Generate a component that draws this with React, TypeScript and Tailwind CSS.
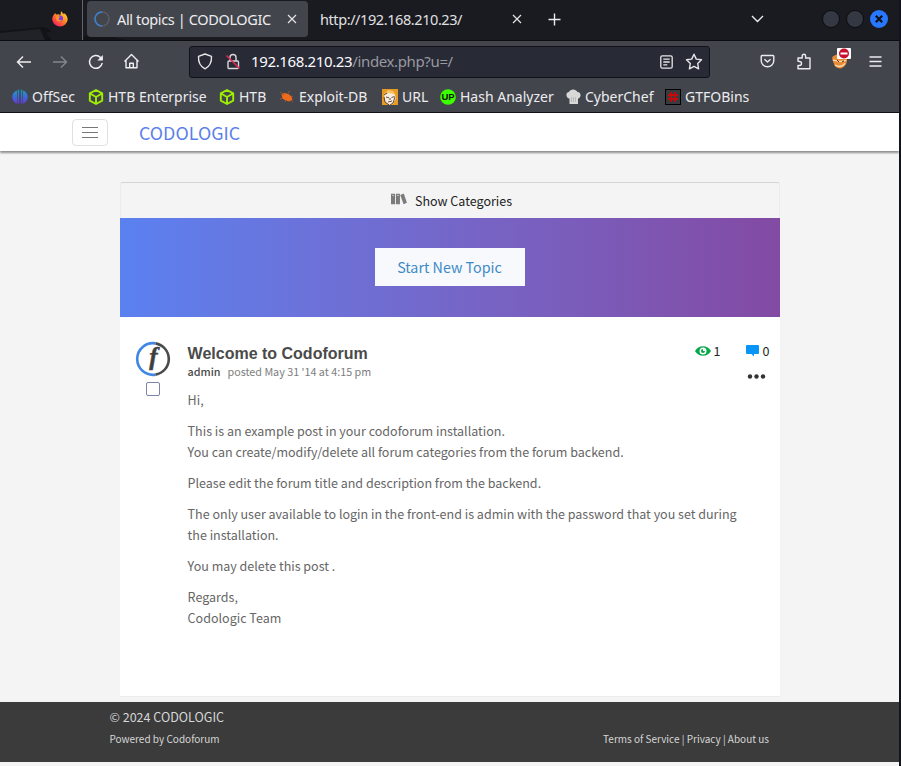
import React from "react";

const chromeFont = "font-['Noto_Sans',sans-serif]";
const pageFont = "font-['Noto_Sans_CJK_SC','Open_Sans',sans-serif]";

function Firefox() {
  return (
    <svg width="18" height="18" viewBox="0 0 18 18">
      <defs>
        <linearGradient id="fx" x1="1" y1="0" x2="0.2" y2="1">
          <stop offset="0" stopColor="#ffe83a" />
          <stop offset="0.45" stopColor="#ff9425" />
          <stop offset="0.75" stopColor="#ff4b3c" />
          <stop offset="1" stopColor="#e8197a" />
        </linearGradient>
      </defs>
      <path d="M3 4.500 4.200 3l.8 1.600 2.200-.3L9.500 5 10 1.200c1 .6 1.600 1.600 2 2.600l1.700-.3c1.900 1.600 3 3.700 3 6.200a7.800 7.800 0 0 1-15.400.4C1 8 1.800 6 3 4.500z" fill="url(#fx)" />
      <circle cx="9" cy="8.600" r="3" fill="#7b3fe0" />
      <path d="M5 7c1.500-1.500 3-1 4 .2L7.500 8.500c0 1.500 2 2 3.500 1-1 3-5 2.500-5.800.3z" fill="#ff9425" />
    </svg>
  );
}

function Close({ className = "" }: { className?: string }) {
  return (
    <svg className={className} width="10" height="10" viewBox="0 0 10 10" stroke="#e4e4e6" strokeWidth="1.200" fill="none">
      <path d="M1 1l8 8M9 1l-8 8" />
    </svg>
  );
}

function TabStrip() {
  return (
    <div className="relative flex h-[41px] border-b border-[#0c0d11] bg-[#1a1b20]">
      <svg className="absolute left-0 top-0" width="130" height="40" viewBox="0 0 130 40">
        <path d="M0 31l44-4 8 4-6 2 6 7H0z" fill="#121317" />
        <path d="M0 33l40-4 5 11H0z" fill="#202227" />
        <path d="M84 36l20-1 22 5H84z" fill="#121317" />
      </svg>
      <div className="relative flex w-[83px] items-start border-r border-[#63656b] pl-[51px] pt-[10px]">
        <Firefox />
      </div>
      <div className="relative ml-1 mt-px flex h-9 w-[221px] items-center rounded bg-[#43454d] pl-[7px]">
        <svg width="16" height="16" viewBox="0 0 16 16" fill="none" strokeWidth="1.500">
          <circle cx="8" cy="8" r="7" stroke="#5a5c64" />
          <path d="M8 15A7 7 0 0 1 8 1" stroke="#3d7fd0" />
        </svg>
        <span className="ml-[7px] w-[170px] whitespace-nowrap text-[14.5px] leading-9 tracking-[-0.37px] text-[#ececee]">All topics | CODOLOGIC</span>
        <Close />
      </div>
      <div className="flex h-[38px] w-[214px] items-center pl-3">
        <span className="w-[192px] whitespace-nowrap text-[14.5px] leading-9 tracking-[-0.42px] text-[#e0e0e2]">http://192.168.210.23/</span>
        <Close />
      </div>
      <svg className="ml-[26px] mt-[13px]" width="13" height="13" viewBox="0 0 13 13" stroke="#ececee" strokeWidth="1.400">
        <path d="M6.500 .5v12M.5 6.500h12" />
      </svg>
      <svg className="ml-[190px] mt-[15px]" width="13" height="8" viewBox="0 0 13 8" fill="none" stroke="#ececee" strokeWidth="1.400">
        <path d="M1 1l5.500 5.500L12 1" />
      </svg>
      <div className="ml-[58px] mt-[10px] flex h-[18px] items-center gap-[6px]">
        <span className="size-[18px] rounded-full border border-[#0b0c0f] bg-[#343843]" />
        <span className="size-[18px] rounded-full border border-[#0b0c0f] bg-[#343843]" />
        <svg width="18" height="18" viewBox="0 0 18 18">
          <circle cx="9" cy="9" r="9" fill="#2777ff" />
          <path d="M5.800 5.800l6.400 6.400M12.200 5.800l-6.400 6.400" stroke="#101218" strokeWidth="2.200" />
        </svg>
      </div>
    </div>
  );
}

function Toolbar() {
  return (
    <div className="flex h-10 items-center bg-[#43454d] pl-4">
      <svg className="mt-px" width="16" height="14" viewBox="0 0 16 14" fill="none" stroke="#f0f0f2" strokeWidth="1.400">
        <path d="M15 7H1.500M7 1.500L1.500 7 7 12.500" />
      </svg>
      <svg className="ml-5 mt-px" width="16" height="14" viewBox="0 0 16 14" fill="none" stroke="#85878d" strokeWidth="1.400">
        <path d="M1 7h13.500M9 1.500L14.500 7 9 12.500" />
      </svg>
      <svg className="ml-5 mt-[2px]" width="16" height="16" viewBox="0 0 16 16" fill="none" stroke="#f0f0f2" strokeWidth="1.500">
        <path d="M14.200 9A6.400 6.400 0 1 1 12.500 3.500l1.500 1.700" />
        <path d="M14.900 1v5.600H9.300z" fill="#f0f0f2" stroke="none" />
      </svg>
      <svg className="ml-[19px]" width="17" height="17" viewBox="0 0 17 17" fill="none" stroke="#f0f0f2" strokeWidth="1.400" strokeLinejoin="round">
        <path d="M1.500 8.500L8.500 1.500l7 7M3 7.500v7.300h11V7.500M6.700 14.500v-4.200h3.600v4.200" />
      </svg>
      <div className="ml-[49px] mt-px flex h-8 w-[521px] items-center rounded-[3px] border border-[#111217] bg-[#282a36] pl-[7px]">
        <svg width="16" height="17" viewBox="0 0 16 17" fill="none" stroke="#e6e6e9" strokeWidth="1.400" strokeLinejoin="round">
          <path d="M8 1l6.500 2.400c.3 5.600-1.700 10-6.500 12.400C3.200 13.400 1.200 9 1.500 3.400z" />
        </svg>
        <svg className="ml-3" width="16" height="17" viewBox="0 0 16 17" fill="none" stroke="#d8d8dc" strokeWidth="1.400">
          <rect x="3" y="8" width="10.500" height="7.500" rx="1" />
          <path d="M5 8V4.500a3 3 0 0 1 6 0V8" />
          <path d="M1.500 2.500l13 13" stroke="#e22850" strokeWidth="1.600" />
        </svg>
        <span className="-mt-px ml-[10px] w-[409px] whitespace-nowrap text-[15px] leading-8 tracking-[-0.37px] text-[#9899a1]">
          <span className="text-[#fbfbfe]">192.168.210.23</span>/index.php?u=/
        </span>
        <svg width="13" height="14" viewBox="0 0 13 14" fill="none" stroke="#e6e6e9" strokeWidth="1.300">
          <rect x=".8" y=".8" width="11.400" height="12.400" rx="1.500" />
          <path d="M3.300 4.200h6.400M3.300 7h6.400M3.300 9.800h4" />
        </svg>
        <svg className="ml-3" width="18" height="17" viewBox="0 0 18 17" fill="none" stroke="#e6e6e9" strokeWidth="1.400" strokeLinejoin="round">
          <path d="M9 1.200l2.300 4.900 5.200.7-3.800 3.700.9 5.300L9 13.300l-4.600 2.500.9-5.300L1.500 6.800l5.200-.7z" />
        </svg>
      </div>
      <svg className="ml-[49.500px]" width="15" height="14" viewBox="0 0 15 14" fill="none" stroke="#ececee" strokeWidth="1.400" strokeLinejoin="round">
        <path d="M2 1.500h11c.5 0 .8.3.8.8V6.500a6.300 6.300 0 0 1-12.600 0V2.300c0-.5.300-.8.800-.8z" />
        <path d="M4.500 5.200l3 2.800 3-2.800" />
      </svg>
      <svg className="ml-[21px]" width="16" height="17" viewBox="0 0 16 17" fill="none" stroke="#ececee" strokeWidth="1.400" strokeLinejoin="round">
        <path d="M2 8V5h4.200V3a1.700 1.700 0 0 1 3.400 0v2H14v10.700H2v-3.200h1.500a2 2 0 0 0 0-4z" />
      </svg>
      <svg className="mb-[5px] ml-[19.500px]" width="21" height="21" viewBox="0 0 21 21">
        <path d="M1 10c3-5 11-5 15 1 .5 4-2.500 9-6.500 9.500C4 20.500 3 17 1 10z" fill="#e88b35" />
        <path d="M2 12c4 1 10 3 13 0M4 17c3 2 7 2 10-1.500" stroke="#f7dcb5" strokeWidth="1.300" fill="none" />
        <path d="M6 12l2 2M11 14l2-1" stroke="#63320d" />
        <rect x="6" y="0" width="14" height="11" rx="1" fill="#fff" />
        <circle cx="13" cy="5.500" r="5" fill="#c8102e" />
        <path d="M9.500 5.500h7" stroke="#fff" strokeWidth="2" />
      </svg>
      <svg className="ml-[17px]" width="13" height="11" viewBox="0 0 13 11" stroke="#ececee" strokeWidth="1.300">
        <path d="M.5 1h12M.5 5.500h12M.5 10h12" />
      </svg>
    </div>
  );
}

function Cube() {
  return (
    <svg width="16" height="16" viewBox="0 0 16 16" fill="none" stroke="#9fef00" strokeWidth="1.900" strokeLinejoin="round">
      <path d="M8 1l6.200 3.400v7.200L8 15l-6.200-3.400V4.400zM2 4.500L8 8l6-3.500M8 8v6.500" />
    </svg>
  );
}

function Bookmark({ icon, label, className }: { icon: React.ReactNode; label: string; className: string }) {
  return (
    <div className={"flex shrink-0 items-center gap-1 whitespace-nowrap " + className}>
      <span className="flex w-4 shrink-0 justify-center">{icon}</span>
      <span className="text-sm leading-[30px]">{label}</span>
    </div>
  );
}

function Bookmarks() {
  return (
    <div className="flex h-[31px] items-center bg-[#43454d] pl-3 text-[#ececee]">
      <Bookmark className="w-[76px]" label="OffSec" icon={
        <svg width="16" height="16" viewBox="0 0 16 16">
          <defs><linearGradient id="os" gradientUnits="userSpaceOnUse" x1="0" y1="0" x2="0" y2="16"><stop offset="0" stopColor="#12a5c5" /><stop offset="1" stopColor="#6c2ce8" /></linearGradient></defs>
          <path d="M5.300 1.200v13.600C-1.500 12.500-1.500 3.500 5.300 1.200zM6 1l1.200-.5V14L6 15.200zM8.800.5l1.200.5v14.200L8.800 14zM10.700 1.200c6.800 2.300 6.800 11.300 0 13.600z" fill="url(#os)" />
        </svg>} />
      <Bookmark className="w-[131px]" label="HTB Enterprise" icon={<Cube />} />
      <Bookmark className="w-[60px]" label="HTB" icon={<Cube />} />
      <Bookmark className="w-[103px]" label="Exploit-DB" icon={
        <svg width="16" height="14" viewBox="0 0 16 14">
          <path d="M2.500 4l3-1 4 1 3 2.500 1 3-1.500 1-2 1-3-1-3-1.500-1-2z" fill="#ee6a1c" />
          <path d="M1 2l4 3M9 3l2-2M4 8l-3 1M7 10l-1 2M12 7l2-1M12 10l2 2" stroke="#a2552c" />
        </svg>} />
      <Bookmark className="w-[58px]" label="URL" icon={
        <svg width="16" height="16" viewBox="0 0 16 16">
          <rect width="16" height="16" fill="#e99a22" />
          <path d="M2 5l5-3 5 2 2 5-3 6-3 1-5-3z" fill="#f7ecde" />
          <path d="M2 5l4-4 5 1 3 4-3-1-4-1-4 2z" fill="#f7c46a" />
          <path d="M2 6l3-2M4 8l3 .8M9.500 8.500l3-1M6 13l4-1M2 8l1 5 4 3M13 8l-2 6-3 2M8 9v2" stroke="#33241b" strokeWidth=".8" fill="none" />
        </svg>} />
      <Bookmark className="w-[125px]" label="Hash Analyzer" icon={
        <svg width="16" height="16" viewBox="0 0 16 16">
          <circle cx="8" cy="8" r="7.800" fill="#3cff00" />
          <text x="8" y="11.300" textAnchor="middle" fontSize="9.500" fontWeight="900" fontFamily="Liberation Sans" fill="#061503">UP</text>
        </svg>} />
      <Bookmark className="w-[100px]" label="CyberChef" icon={
        <svg width="15" height="16" viewBox="0 0 15 16">
          <path d="M3.500 15V9.500C-.5 9-.5 3 3 3c1-3.500 7-3.500 8.500 0 4 0 4 6 .5 6.500V15z" fill="#d8d8d8" />
          <path d="M5.500 8v5M7.500 8v5M9.500 8v5" stroke="#aaa" strokeWidth=".7" />
        </svg>} />
      <Bookmark className="" label="GTFOBins" icon={
        <svg width="16" height="16" viewBox="0 0 16 16">
          <rect x=".5" y=".5" width="15" height="15" fill="#383a40" stroke="#000" />
          <path d="M6 3v10M10 3v10M3 6h10M3 10h10" stroke="#c40b0b" strokeWidth="1.800" />
        </svg>} />
    </div>
  );
}

function Avatar() {
  return (
    <svg width="36" height="36" viewBox="0 0 36 36" fill="none">
      <path d="M20.500 33.600A15.800 15.800 0 1 1 20.500 2.400" stroke="#3f87e5" strokeWidth="2.600" />
      <path d="M20.500 2.400a15.800 15.800 0 0 1 0 31.200" stroke="#4b4b4d" strokeWidth="2.600" />
      <text x="18.500" y="24" textAnchor="middle" fontFamily="Liberation Serif" fontStyle="italic" fontWeight="700" fontSize="25" fill="#3f3f41" stroke="#3f3f41" strokeWidth=".5">f</text>
    </svg>
  );
}

function Topic() {
  return (
    <article className="flex h-[380px] border-b border-[#ececec] bg-white pl-[15px] pt-6">
      <div className="flex w-9 flex-col items-center">
        <Avatar />
        <span className="mt-[5px] size-[14px] rounded-[2px] border border-[#7e83a8] bg-white" />
      </div>
      <div className="ml-[16.600px] w-[560px]">
        <h2 className="pt-px font-['Liberation_Sans',Arial,sans-serif] text-base font-bold leading-[23px] text-[#4a4a4a]">Welcome to Codoforum</h2>
        <p className="flex gap-[7px] text-[10.760px] leading-[14px] text-[#7d7d7d]">
          <span className="font-medium text-[#4a4a4a]">admin</span>
          <span>posted May 31 '14 at 4:15 pm</span>
        </p>
        <div className="mt-[10px] space-y-[10px] text-[12.530px] leading-[21px] text-[#666]">
          <p>Hi,</p>
          <p>This is an example post in your codoforum installation.<br />You can create/modify/delete all forum categories from the forum backend.</p>
          <p>Please edit the forum title and description from the backend.</p>
          <p className="whitespace-nowrap">The only user available to login in the front-end is admin with the password that you set during<br />the installation.</p>
          <p>You may delete this post .</p>
          <p>Regards,<br />Codologic Team</p>
        </div>
      </div>
      <div className="-ml-14 flex flex-1 flex-col items-end pr-[10.500px] text-[12.520px] text-[#222]">
        <div className="flex h-5 items-center">
          <svg width="16" height="10" viewBox="0 0 16 10">
            <path d="M0 5C3-1.300 13-1.300 16 5 13 11.300 3 11.300 0 5z" fill="#08a84a" />
            <circle cx="8" cy="5" r="3.500" fill="#fff" />
            <circle cx="8" cy="5" r="2" fill="#08a84a" />
            <path d="M8 5V2.700A2.300 2.300 0 0 1 10.300 5z" fill="#fff" />
          </svg>
          <span className="ml-[3px]">1</span>
          <svg className="ml-[25px]" width="13" height="12" viewBox="0 0 13 12">
            <path d="M1 0h11a1 1 0 0 1 1 1v7a1 1 0 0 1-1 1H8v2.500L5.500 9H1a1 1 0 0 1-1-1V1a1 1 0 0 1 1-1z" fill="#0796f7" />
          </svg>
          <span className="ml-1">0</span>
        </div>
        <svg className="mr-[3.500px] mt-[13px]" width="19" height="5" viewBox="0 0 19 5" fill="#333">
          <circle cx="3" cy="2.500" r="2.200" /><circle cx="9.500" cy="2.500" r="2.200" /><circle cx="16" cy="2.500" r="2.200" />
        </svg>
      </div>
    </article>
  );
}

export default function App() {
  return (
    <div className={"flex h-[766px] w-[901px] flex-col overflow-hidden border-r-2 border-[#13141b] bg-[#f4f4f4] " + chromeFont}>
      <TabStrip />
      <Toolbar />
      <Bookmarks />
      <div className={"flex flex-1 flex-col border-t border-[#111218] " + pageFont}>
        <header className="flex h-[38px] shrink-0 items-center bg-white pl-[72px] shadow-[0_2px_2px_rgba(0,0,0,0.42)]">
          <button className="flex h-[27px] w-9 flex-col items-center justify-center gap-1 rounded border border-[#e0e0e0]">
            <span className="h-px w-4 bg-[#777]" />
            <span className="h-px w-4 bg-[#777]" />
            <span className="h-px w-4 bg-[#777]" />
          </button>
          <span className="-mt-px ml-[31px] text-[17.900px] leading-[38px] text-[#5b7fec]">CODOLOGIC</span>
        </header>
        <main className="ml-[120px] mt-[31px] w-[660px]">
          <div className="flex h-9 items-center justify-center rounded-t-[3px] border-x border-t border-x-[#ececec] border-t-[#d4d4d4] pl-[3px] text-[12.520px] text-[#222]">
            <svg className="-mt-[3px] mr-2" width="16" height="12" viewBox="0 0 17 12" fill="#7b7b7b">
              <path d="M0 .5h4.300v11H0zM5.200.5h4.300v11H5.200zM9.800 1.700l3.800-1.500 3.300 9.800-3.500 1.500z" />
              <path d="M1 2.200h2.300M6.200 2.200h2.300" stroke="#ddd" strokeWidth=".7" />
            </svg>
            <span className="pt-[2px]">Show Categories</span>
          </div>
          <div className="flex h-[99px] justify-center bg-gradient-to-r from-[#5a81f0] to-[#824aa3] pt-[30px]">
            <button className="h-[38px] w-[150px] bg-[#f8f9fc] pr-px text-[14.300px] text-[#3c8bc8]">Start New Topic</button>
          </div>
          <Topic />
        </main>
        <footer className="mt-[5px] h-[60px] shrink-0 bg-[#3b3b3b] pl-[109.500px] pr-[130px] text-[#d6d6d6]">
          <p className="pt-[4px] text-[12.520px] leading-[22px]">© 2024 CODOLOGIC</p>
          <div className="flex justify-between text-[10px] leading-[21px]">
            <span>Powered by Codoforum</span>
            <span>Terms of Service | Privacy | About us</span>
          </div>
        </footer>
      </div>
    </div>
  );
}
